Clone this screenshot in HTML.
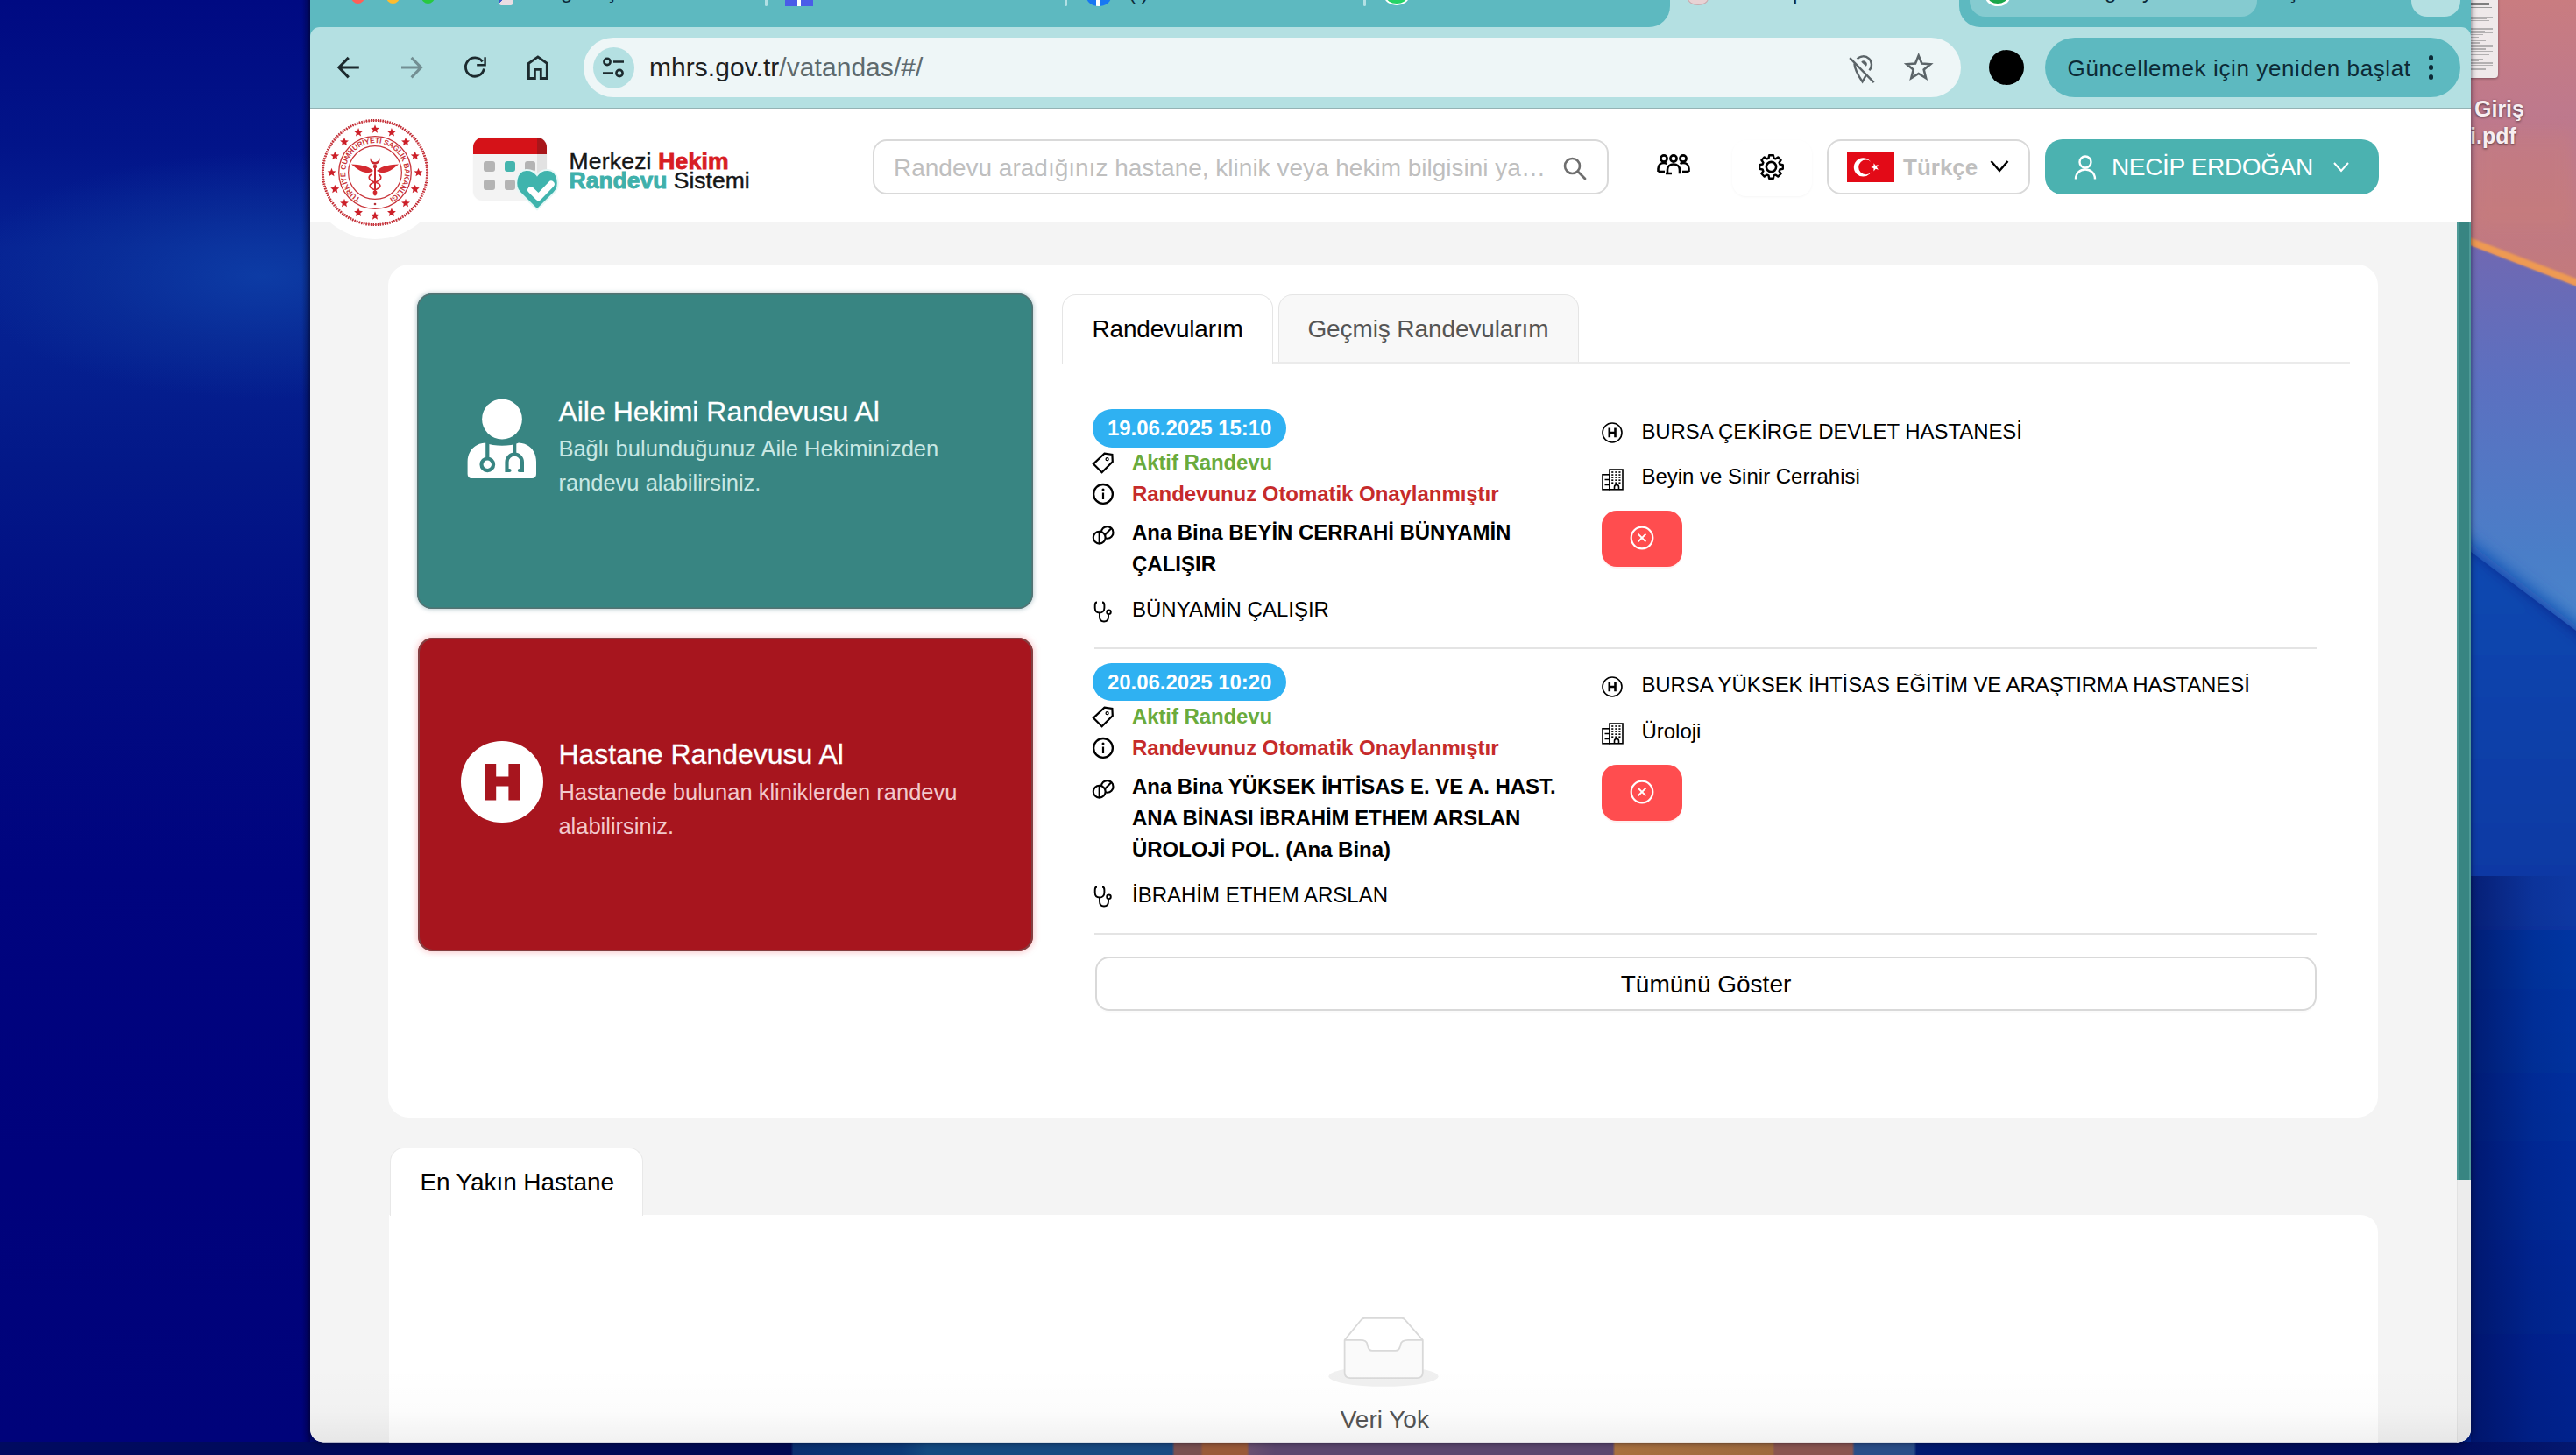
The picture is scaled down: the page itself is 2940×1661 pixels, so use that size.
<!DOCTYPE html>
<html><head><meta charset="utf-8"><style>
*{margin:0;padding:0;box-sizing:border-box}
html,body{width:2940px;height:1661px;overflow:hidden;background:#000a70}
body{position:relative;font-family:"Liberation Sans",sans-serif}
.t{position:absolute;white-space:nowrap;line-height:1}
.r{position:absolute}
svg{position:absolute;overflow:visible}
</style></head><body>
<div class="r" style="left:0;top:0;width:354px;height:1661px;background:radial-gradient(ellipse 340px 140px at 300px 315px,rgba(14,64,168,.85) 0%,rgba(14,60,160,.4) 55%,rgba(14,60,160,0) 100%),linear-gradient(180deg,#000a82 0%,#021489 10%,#062293 17%,#052090 24%,#031888 32%,#010c82 45%,#00047f 60%,#00027c 80%,#00037a 100%)"></div>
<div class="r" style="left:344px;top:0;width:10px;height:1661px;background:linear-gradient(90deg,rgba(0,0,30,0) 0%,rgba(0,0,30,.35) 100%)"></div>
<svg style="left:2820px;top:0" width="120" height="1661" viewBox="0 0 120 1661"><defs>
<filter id="bl8" x="-50%" y="-20%" width="200%" height="140%"><feGaussianBlur stdDeviation="10"/></filter><filter id="bl1"><feGaussianBlur stdDeviation="1.2"/></filter><linearGradient id="g1" x1="0" y1="0" x2="0" y2="1"><stop offset="0" stop-color="#c97c80"/><stop offset=".5" stop-color="#bb7890"/><stop offset="1" stop-color="#c47a7a"/></linearGradient>
<linearGradient id="g2" x1="0" y1="0" x2="0" y2="1"><stop offset="0" stop-color="#7068b2"/><stop offset=".35" stop-color="#5c70c0"/><stop offset=".8" stop-color="#4a7ec8"/><stop offset="1" stop-color="#4a86cc"/></linearGradient>
<linearGradient id="g3" x1="0" y1="0" x2="0" y2="1"><stop offset="0" stop-color="#0c4ab2"/><stop offset=".3" stop-color="#083ca6"/><stop offset=".6" stop-color="#042e9c"/><stop offset="1" stop-color="#021e8a"/></linearGradient>
</defs>
<rect width="120" height="330" fill="url(#g1)"/><rect y="150" width="120" height="110" fill="#d08070" opacity=".35" filter="url(#bl8)"/>
<polygon points="0,280 120,326 120,720 0,630" fill="url(#g2)"/>
<line x1="-10" y1="272" x2="130" y2="326" stroke="#ee9a52" stroke-width="8" filter="url(#bl1)"/>
<polygon points="-40,590 160,745 160,1700 -40,1700" fill="url(#g3)" filter="url(#bl8)"/>
<linearGradient id="g5" x1="0" y1="0" x2="1" y2="0"><stop offset="0" stop-color="#000a50" stop-opacity=".55"/><stop offset=".6" stop-color="#000a50" stop-opacity=".1"/><stop offset="1" stop-color="#000a50" stop-opacity="0"/></linearGradient><rect y="1000" width="120" height="661" fill="url(#g5)"/>
</svg>
<div class="r" style="left:0;top:1646px;width:2940px;height:15px;background:linear-gradient(90deg,#000a60 0%,#000a52 30.7%,#0a3070 30.8%,#0c3a78 35%,#134a80 36%,#1a4a82 45.5%,#7a5050 45.6%,#7a5050 46.6%,#9a5a38 46.7%,#9a5a38 48.4%,#6a5070 48.5%,#5c476e 49.5%,#5c476e 62.6%,#a8703f 62.7%,#9e6a3e 68.8%,#8a5550 68.9%,#8a5550 71.9%,#2a4e88 72%,#2a4e88 74.3%,#001a70 74.4%,#000e5a 85%,#000c5c 95%,#041870 100%)"></div>
<div class="r" style="left:2814.0px;top:-5.0px;width:37.0px;height:94.0px;background:#efe9ea;border-radius:0 0 4px 4px;box-shadow:0 1px 3px rgba(0,0,0,.35)"></div>
<div class="r" style="left:2820.0px;top:3.0px;width:21.0px;height:2.5px;background:#5a5a5a;opacity:.75"></div>
<div class="r" style="left:2820.0px;top:7.5px;width:24.0px;height:1.0px;background:#777;opacity:.7"></div>
<div class="r" style="left:2820.0px;top:18.5px;width:25.0px;height:1.3px;background:#8a8a8a;opacity:.6"></div>
<div class="r" style="left:2820.0px;top:20.8px;width:18.0px;height:1.3px;background:#8a8a8a;opacity:.6"></div>
<div class="r" style="left:2820.0px;top:23.1px;width:21.0px;height:1.3px;background:#8a8a8a;opacity:.6"></div>
<div class="r" style="left:2820.0px;top:27.7px;width:25.0px;height:1.3px;background:#8a8a8a;opacity:.6"></div>
<div class="r" style="left:2820.0px;top:32.3px;width:25.0px;height:1.3px;background:#8a8a8a;opacity:.6"></div>
<div class="r" style="left:2820.0px;top:34.6px;width:16.0px;height:1.3px;background:#8a8a8a;opacity:.6"></div>
<div class="r" style="left:2820.0px;top:36.9px;width:25.0px;height:1.3px;background:#8a8a8a;opacity:.6"></div>
<div class="r" style="left:2820.0px;top:39.2px;width:14.0px;height:1.3px;background:#8a8a8a;opacity:.6"></div>
<div class="r" style="left:2820.0px;top:41.5px;width:9.0px;height:1.3px;background:#8a8a8a;opacity:.6"></div>
<div class="r" style="left:2820.0px;top:43.8px;width:25.0px;height:1.3px;background:#8a8a8a;opacity:.6"></div>
<div class="r" style="left:2820.0px;top:46.1px;width:17.0px;height:1.3px;background:#8a8a8a;opacity:.6"></div>
<div class="r" style="left:2820.0px;top:48.4px;width:11.0px;height:1.3px;background:#8a8a8a;opacity:.6"></div>
<div class="r" style="left:2820.0px;top:50.7px;width:25.0px;height:1.3px;background:#8a8a8a;opacity:.6"></div>
<div class="r" style="left:2820.0px;top:53.0px;width:25.0px;height:1.3px;background:#8a8a8a;opacity:.6"></div>
<div class="r" style="left:2820.0px;top:55.3px;width:17.0px;height:1.3px;background:#8a8a8a;opacity:.6"></div>
<div class="r" style="left:2820.0px;top:57.6px;width:25.0px;height:1.3px;background:#8a8a8a;opacity:.6"></div>
<div class="r" style="left:2820.0px;top:59.9px;width:25.0px;height:1.3px;background:#8a8a8a;opacity:.6"></div>
<div class="r" style="left:2820.0px;top:62.2px;width:21.0px;height:1.3px;background:#8a8a8a;opacity:.6"></div>
<div class="r" style="left:2820.0px;top:66.8px;width:14.0px;height:1.3px;background:#8a8a8a;opacity:.6"></div>
<div class="r" style="left:2820.0px;top:69.1px;width:9.0px;height:1.3px;background:#8a8a8a;opacity:.6"></div>
<div class="r" style="left:2820.0px;top:71.4px;width:25.0px;height:1.3px;background:#8a8a8a;opacity:.6"></div>
<div class="r" style="left:2820.0px;top:73.7px;width:25.0px;height:1.3px;background:#8a8a8a;opacity:.6"></div>
<div class="r" style="left:2820.0px;top:76.0px;width:25.0px;height:1.3px;background:#8a8a8a;opacity:.6"></div>
<div class="r" style="left:2820.0px;top:78.3px;width:17.0px;height:1.3px;background:#8a8a8a;opacity:.6"></div>
<div class="t " style="left:2824.0px;top:111.8px;font-size:25px;color:#f8eef0;font-weight:700;text-shadow:0 1px 3px rgba(0,0,0,.6)">Giriş</div>
<div class="t " style="left:2819.0px;top:143.4px;font-size:25px;color:#f8eef0;font-weight:700;text-shadow:0 1px 3px rgba(0,0,0,.6)">i.pdf</div>
<div class="r" style="left:354.0px;top:-20.0px;width:2466.0px;height:1666.5px;border-radius:0 0 15px 15px;box-shadow:0 0 6px 1px rgba(0,0,20,.45)"></div>
<div id="win" class="r" style="left:0;top:0;width:2940px;height:1661px;clip-path:inset(0px 120px 14.5px 354px round 0 0 15px 15px);background:#f4f4f4">
<div class="r" style="left:354.0px;top:0.0px;width:2466.0px;height:45.0px;background:#5db9c0"></div>
<div class="r" style="left:400.5px;top:-11.5px;width:15.0px;height:15.0px;background:#ff5f57;border-radius:50%"></div>
<div class="r" style="left:440.5px;top:-11.5px;width:15.0px;height:15.0px;background:#febc2e;border-radius:50%"></div>
<div class="r" style="left:480.5px;top:-11.5px;width:15.0px;height:15.0px;background:#28c840;border-radius:50%"></div>
<div class="r" style="left:570.0px;top:-10.0px;width:15.0px;height:15.7px;background:linear-gradient(135deg,#3f5bd0 0 45%,#eadde3 45%);border-radius:0 0 2px 2px"></div>
<div class="t " style="left:640.0px;top:-21.8px;font-size:24px;color:#0d2b3a;font-weight:400;">ğ</div>
<div class="t " style="left:692.0px;top:-21.8px;font-size:24px;color:#0d2b3a;font-weight:400;">ş</div>
<div class="r" style="left:872.5px;top:-5.0px;width:3.0px;height:11.8px;background:#b3e0e4;border-radius:2px"></div>
<div class="r" style="left:1214.5px;top:-5.0px;width:3.0px;height:11.8px;background:#b3e0e4;border-radius:2px"></div>
<div class="r" style="left:1556.0px;top:-5.0px;width:3.0px;height:11.8px;background:#b3e0e4;border-radius:2px"></div>
<div class="r" style="left:896.0px;top:-10.0px;width:31.5px;height:16.8px;background:linear-gradient(90deg,#4a5ce8 0 43%,#fff 43% 57%,#4a5ce8 57%)"></div>
<div class="r" style="left:1240.0px;top:-14.0px;width:28.0px;height:20.8px;background:linear-gradient(90deg,#1877f2 0 38%,#fff 38% 57%,#1877f2 57%);border-radius:50%"></div>
<div class="t " style="left:1288.0px;top:-21.3px;font-size:24px;color:#0d2b3a;font-weight:400;">( )</div>
<div class="r" style="left:1580.0px;top:-14.0px;width:27.6px;height:19.8px;background:#25d366;border-radius:50%;border:2.5px solid #fff"></div>
<div class="r" style="left:1882.0px;top:0.0px;width:378.0px;height:31.0px;background:#b4e0e2"></div>
<div class="r" style="left:1850.0px;top:-5.0px;width:56.0px;height:36.0px;background:#5db9c0;border-bottom-right-radius:24px"></div>
<div class="r" style="left:2236.0px;top:-5.0px;width:54.0px;height:36.0px;background:#5db9c0;border-bottom-left-radius:24px"></div>
<div class="r" style="left:1926.0px;top:-10.0px;width:24.0px;height:16.0px;background:#e8d2d4;border-radius:50%;border:1.5px solid #c9a9ad"></div>
<div class="t " style="left:2046.0px;top:-21.3px;font-size:24px;color:#0d2b3a;font-weight:400;">p</div>
<div class="r" style="left:2248.0px;top:-20.0px;width:328.0px;height:38.6px;background:#85cbd0;border-radius:0 0 18px 18px"></div>
<div class="r" style="left:2266.0px;top:-14.0px;width:28.0px;height:21.0px;background:#1aa64a;border-radius:50%;border:3px solid #fff"></div>
<div class="t " style="left:2402.0px;top:-21.8px;font-size:24px;color:#0d2b3a;font-weight:400;">g</div>
<div class="t " style="left:2445.0px;top:-21.8px;font-size:24px;color:#0d2b3a;font-weight:400;">y</div>
<div class="t " style="left:2611.0px;top:-21.8px;font-size:24px;color:#0d2b3a;font-weight:400;">ş</div>
<div class="r" style="left:2752.0px;top:-20.0px;width:56.0px;height:38.6px;background:#b4e0e2;border-radius:0 0 18px 18px"></div>
<div class="r" style="left:354.0px;top:31.0px;width:2466.0px;height:93.0px;background:#b4e0e2;border-radius:11px 11px 0 0"></div>
<svg style="left:380px;top:60px" width="36" height="36" viewBox="0 0 36 36"><path d="M29.8 17H7.5M17.8 5.8L6.9 17L17.8 28.3" fill="none" stroke="#1c2a2e" stroke-width="3.1"/></svg>
<svg style="left:452px;top:60px" width="36" height="36" viewBox="0 0 36 36"><path d="M6 17H28M17.6 5.8L28.5 17L17.6 28.3" fill="none" stroke="#738f93" stroke-width="3.1"/></svg>
<svg style="left:524px;top:59px" width="36" height="36" viewBox="0 0 36 36"><path d="M26.6 11.4A10.6 10.6 0 1 0 28.4 19.5" fill="none" stroke="#1c2a2e" stroke-width="2.8"/><path d="M29.6 6.2V15.3H20.2" fill="none" stroke="#1c2a2e" stroke-width="2.4"/></svg>
<svg style="left:596px;top:59px" width="36" height="36" viewBox="0 0 36 36"><path d="M7.4 30.5V13.3L17.9 5.9L28.3 13.3V30.5H21.3V20.4H14.4V30.5Z" fill="none" stroke="#1c2a2e" stroke-width="2.8" stroke-linejoin="miter"/></svg>
<div class="r" style="left:666.0px;top:43.0px;width:1572.0px;height:67.7px;background:#eef6f7;border-radius:34px"></div>
<div class="r" style="left:676.5px;top:53.5px;width:47.0px;height:47.0px;background:#b4e0e2;border-radius:50%"></div>
<svg style="left:682px;top:59px" width="36" height="36" viewBox="0 0 36 36"><circle cx="11" cy="11.5" r="3.6" fill="none" stroke="#1c2a2e" stroke-width="2.6"/><path d="M18 11.5H30M6 24.5H18" stroke="#1c2a2e" stroke-width="2.6"/><circle cx="25" cy="24.5" r="3.6" fill="none" stroke="#1c2a2e" stroke-width="2.6"/></svg>
<div class="t " style="left:741.0px;top:62.0px;font-size:30px;color:#1f1f1f;font-weight:400;letter-spacing:0.05px"><span style="color:#1f1f1f">mhrs.gov.tr</span><span style="color:#5f6a6d">/vatandas/#/</span></div>
<svg style="left:2100px;top:55px" width="50" height="45" viewBox="0 0 50 45"><g fill="none" stroke="#5b6468" stroke-width="2.4"><path d="M19.6 12.3A9.3 9.3 0 0 1 33.4 25.3"/><path d="M16.4 17.5C16.6 24 20 30 25.6 38.3L29.8 30.8"/><path d="M11.2 11.2L38.7 39.1"/></g><path d="M24.2 15.8A3.6 3.6 0 0 1 29.7 20.8Z" fill="#5b6468"/></svg>
<svg style="left:2100px;top:55px" width="120" height="45" viewBox="0 0 120 45"><path d="M89.7 8.4L93.4 17.6L103.3 18.3L95.7 24.6L98.1 34.3L89.7 29L81.3 34.3L83.7 24.6L76.1 18.3L86 17.6Z" fill="none" stroke="#5b6468" stroke-width="2.6" stroke-linejoin="miter"/></svg>
<div class="r" style="left:2270.0px;top:57.0px;width:40.0px;height:40.0px;background:#000;border-radius:50%"></div>
<div class="r" style="left:2334.0px;top:43.0px;width:474.0px;height:67.7px;background:#5db9c0;border-radius:34px"></div>
<div class="t " style="left:2359.6px;top:64.7px;font-size:26px;color:#0c2a36;font-weight:400;letter-spacing:0.62px">Güncellemek için yeniden başlat</div>
<div class="r" style="left:2772.0px;top:63.4px;width:5.2px;height:5.2px;background:#0c2a36;border-radius:50%"></div>
<div class="r" style="left:2772.0px;top:74.4px;width:5.2px;height:5.2px;background:#0c2a36;border-radius:50%"></div>
<div class="r" style="left:2772.0px;top:85.4px;width:5.2px;height:5.2px;background:#0c2a36;border-radius:50%"></div>
<div class="r" style="left:354.0px;top:124.6px;width:2466.0px;height:1536.4px;background:#f4f4f4"></div>
<div class="r" style="left:354.0px;top:124.6px;width:2450.0px;height:128.1px;background:#fff"></div>
<div class="r" style="left:2804.0px;top:124.6px;width:16.0px;height:128.1px;background:#fff"></div>
<div class="r" style="left:2804.0px;top:252.7px;width:16.0px;height:1408.3px;background:#ececec;border-left:1px solid #e2e2e2"></div>
<div class="r" style="left:2804.0px;top:252.7px;width:16.0px;height:1094.3px;background:#388582;box-shadow:inset 2px 0 0 #4e9a97,inset -2px 0 0 #4e9a97"></div>
<div class="r" style="left:350.0px;top:117.0px;width:156.0px;height:156.0px;background:#fff;border-radius:50%;clip-path:inset(7.6px 0 0 0)"></div>
<svg style="left:366px;top:135px" width="124" height="124" viewBox="-62 -62 124 124"><circle r="59.6" fill="none" stroke="#b8262e" stroke-width="3" stroke-dasharray="1.5 1.2"/><circle r="59.6" fill="none" stroke="#e04a52" stroke-width="1" opacity=".6"/><polygon points="18.94,-50.93 20.29,-47.59 23.89,-47.34 21.13,-45.02 22.00,-41.53 18.94,-43.43 15.89,-41.53 16.76,-45.02 14.00,-47.34 17.59,-47.59" fill="#cc1f28"/><polygon points="35.00,-40.20 36.35,-36.86 39.95,-36.61 37.19,-34.29 38.06,-30.79 35.00,-32.70 31.95,-30.79 32.81,-34.29 30.06,-36.61 33.65,-36.86" fill="#cc1f28"/><polygon points="45.73,-24.14 47.08,-20.80 50.68,-20.55 47.92,-18.23 48.79,-14.74 45.73,-16.64 42.68,-14.74 43.54,-18.23 40.79,-20.55 44.38,-20.80" fill="#cc1f28"/><polygon points="49.50,-5.20 50.85,-1.86 54.45,-1.61 51.69,0.71 52.56,4.21 49.50,2.30 46.44,4.21 47.31,0.71 44.55,-1.61 48.15,-1.86" fill="#cc1f28"/><polygon points="45.73,13.74 47.08,17.08 50.68,17.34 47.92,19.65 48.79,23.15 45.73,21.24 42.68,23.15 43.54,19.65 40.79,17.34 44.38,17.08" fill="#cc1f28"/><polygon points="35.00,29.80 36.35,33.14 39.95,33.39 37.19,35.71 38.06,39.21 35.00,37.30 31.95,39.21 32.81,35.71 30.06,33.39 33.65,33.14" fill="#cc1f28"/><polygon points="18.94,40.53 20.29,43.87 23.89,44.13 21.13,46.44 22.00,49.94 18.94,48.03 15.89,49.94 16.76,46.44 14.00,44.13 17.59,43.87" fill="#cc1f28"/><polygon points="0.00,44.30 1.35,47.64 4.95,47.89 2.19,50.21 3.06,53.71 0.00,51.80 -3.06,53.71 -2.19,50.21 -4.95,47.89 -1.35,47.64" fill="#cc1f28"/><polygon points="-18.94,40.53 -17.59,43.87 -14.00,44.13 -16.76,46.44 -15.89,49.94 -18.94,48.03 -22.00,49.94 -21.13,46.44 -23.89,44.13 -20.29,43.87" fill="#cc1f28"/><polygon points="-35.00,29.80 -33.65,33.14 -30.06,33.39 -32.81,35.71 -31.95,39.21 -35.00,37.30 -38.06,39.21 -37.19,35.71 -39.95,33.39 -36.35,33.14" fill="#cc1f28"/><polygon points="-45.73,13.74 -44.38,17.08 -40.79,17.34 -43.54,19.65 -42.68,23.15 -45.73,21.24 -48.79,23.15 -47.92,19.65 -50.68,17.34 -47.08,17.08" fill="#cc1f28"/><polygon points="-49.50,-5.20 -48.15,-1.86 -44.55,-1.61 -47.31,0.71 -46.44,4.21 -49.50,2.30 -52.56,4.21 -51.69,0.71 -54.45,-1.61 -50.85,-1.86" fill="#cc1f28"/><polygon points="-45.73,-24.14 -44.38,-20.80 -40.79,-20.55 -43.54,-18.23 -42.68,-14.74 -45.73,-16.64 -48.79,-14.74 -47.92,-18.23 -50.68,-20.55 -47.08,-20.80" fill="#cc1f28"/><polygon points="-35.00,-40.20 -33.65,-36.86 -30.06,-36.61 -32.81,-34.29 -31.95,-30.79 -35.00,-32.70 -38.06,-30.79 -37.19,-34.29 -39.95,-36.61 -36.35,-36.86" fill="#cc1f28"/><polygon points="-18.94,-50.93 -17.59,-47.59 -14.00,-47.34 -16.76,-45.02 -15.89,-41.53 -18.94,-43.43 -22.00,-41.53 -21.13,-45.02 -23.89,-47.34 -20.29,-47.59" fill="#cc1f28"/><polygon points="-0.00,-54.70 1.35,-51.36 4.95,-51.11 2.19,-48.79 3.06,-45.29 -0.00,-47.20 -3.06,-45.29 -2.19,-48.79 -4.95,-51.11 -1.35,-51.36" fill="#cc1f28"/><circle r="41.3" fill="none" stroke="#c8343a" stroke-width="1.3"/><circle r="30.4" fill="none" stroke="#c8343a" stroke-width="1.2"/><g font-family="Liberation Sans" font-size="8.4" fill="#c8343a" font-weight="700"><text transform="translate(-18.69 28.16) rotate(213.6)" text-anchor="middle">T</text><text transform="translate(-23.02 24.75) rotate(222.9)" text-anchor="middle">Ü</text><text transform="translate(-27.02 20.30) rotate(233.1)" text-anchor="middle">R</text><text transform="translate(-30.18 15.22) rotate(243.2)" text-anchor="middle">K</text><text transform="translate(-31.81 11.44) rotate(250.2)" text-anchor="middle">İ</text><text transform="translate(-32.91 7.71) rotate(256.8)" text-anchor="middle">Y</text><text transform="translate(-33.73 2.25) rotate(266.2)" text-anchor="middle">E</text><text transform="translate(-33.31 -5.74) rotate(279.8)" text-anchor="middle">C</text><text transform="translate(-31.78 -11.52) rotate(289.9)" text-anchor="middle">U</text><text transform="translate(-29.01 -17.34) rotate(300.9)" text-anchor="middle">M</text><text transform="translate(-25.20 -22.53) rotate(311.8)" text-anchor="middle">H</text><text transform="translate(-20.83 -26.62) rotate(322.0)" text-anchor="middle">U</text><text transform="translate(-15.81 -29.87) rotate(332.1)" text-anchor="middle">R</text><text transform="translate(-12.06 -31.57) rotate(339.1)" text-anchor="middle">İ</text><text transform="translate(-8.35 -32.75) rotate(345.7)" text-anchor="middle">Y</text><text transform="translate(-2.91 -33.67) rotate(355.1)" text-anchor="middle">E</text><text transform="translate(2.37 -33.72) rotate(364.0)" text-anchor="middle">T</text><text transform="translate(6.00 -33.26) rotate(370.2)" text-anchor="middle">İ</text><text transform="translate(11.92 -31.63) rotate(380.6)" text-anchor="middle">S</text><text transform="translate(17.11 -29.15) rotate(390.4)" text-anchor="middle">A</text><text transform="translate(22.15 -25.53) rotate(401.0)" text-anchor="middle">Ğ</text><text transform="translate(26.16 -21.40) rotate(410.7)" text-anchor="middle">L</text><text transform="translate(28.32 -18.46) rotate(416.9)" text-anchor="middle">I</text><text transform="translate(30.35 -14.87) rotate(423.9)" text-anchor="middle">K</text><text transform="translate(33.05 -7.10) rotate(437.9)" text-anchor="middle">B</text><text transform="translate(33.78 -1.17) rotate(448.0)" text-anchor="middle">A</text><text transform="translate(33.46 4.81) rotate(458.2)" text-anchor="middle">K</text><text transform="translate(32.09 10.63) rotate(468.3)" text-anchor="middle">A</text><text transform="translate(29.71 16.12) rotate(478.5)" text-anchor="middle">N</text><text transform="translate(26.69 20.73) rotate(487.8)" text-anchor="middle">L</text><text transform="translate(24.30 23.49) rotate(494.0)" text-anchor="middle">I</text><text transform="translate(21.08 26.42) rotate(501.4)" text-anchor="middle">Ğ</text><text transform="translate(17.51 28.91) rotate(508.8)" text-anchor="middle">I</text></g><path d="M0 -7V26" stroke="#c82a30" stroke-width="2"/><circle cx="0" cy="-7" r="2.2" fill="#c82a30"/><path d="M-27 -9.5C-18 -9 -8 -8 -2 -2C-8 2 -14 0 -20 -4C-23 -6 -25 -8 -27 -9.5Z" fill="#d42a30"/><path d="M27 -9.5C18 -9 8 -8 2 -2C8 2 14 0 20 -4C23 -6 25 -8 27 -9.5Z" fill="#d42a30"/><path d="M-4 2C-9 5 -7 9 0 11C7 13 8 16 2 19C-3 21 -2 24 0 26M4 2C9 5 7 9 0 11C-7 13 -8 16 -2 19C3 21 2 24 0 26" fill="none" stroke="#d42a30" stroke-width="1.6"/><path d="M-5 -17A5.5 5.5 0 1 0 5 -17A4.3 4.3 0 1 1 -5 -17Z" fill="#c82a30"/><circle cx="0" cy="36" r="1.3" fill="#b43038"/></svg>
<div class="r" style="left:540.0px;top:157.0px;width:84.0px;height:72.0px;background:#f3f3f3;border-radius:11px;box-shadow:0 0 2px rgba(0,0,0,.06)"></div>
<div class="r" style="left:540.0px;top:157.0px;width:84.0px;height:18.7px;background:linear-gradient(90deg,#d51218 0 87%,#a8161a 87%);border-radius:11px 11px 0 0"></div>
<div class="r" style="left:613.0px;top:175.7px;width:11.0px;height:24.3px;background:#e2e2e2"></div>
<div class="r" style="left:552.4px;top:184.3px;width:12.2px;height:12.0px;background:#b4b4b4;border-radius:3px"></div>
<div class="r" style="left:576.2px;top:184.3px;width:12.2px;height:12.0px;background:#45b5ae;border-radius:3px"></div>
<div class="r" style="left:599.0px;top:184.3px;width:12.2px;height:12.0px;background:#b4b4b4;border-radius:3px"></div>
<div class="r" style="left:552.4px;top:204.9px;width:12.2px;height:12.0px;background:#b4b4b4;border-radius:3px"></div>
<div class="r" style="left:576.2px;top:204.9px;width:12.2px;height:12.0px;background:#b4b4b4;border-radius:3px"></div>
<svg style="left:586px;top:191px" width="54" height="52" viewBox="0 0 54 52"><path d="M27 48.4L7.5 29C0.5 22 2 4 14.5 3C20.5 2.5 24.5 5.5 27 9C29.5 5.5 33.5 2.5 39.5 3C52 4 53.5 22 46.5 29Z" fill="#3fb4ad" stroke="#e6f7f6" stroke-width="2"/><path d="M19.9 25.9L28.5 34.3L43 19.3" fill="none" stroke="#fff" stroke-width="7.5" stroke-linecap="round" stroke-linejoin="round"/></svg>
<div class="t " style="left:649.5px;top:170.6px;font-size:26.5px;color:#161616;font-weight:400;letter-spacing:0.2px;-webkit-text-stroke:0.45px #161616">Merkezi <span style="color:#d81d24;font-weight:700;-webkit-text-stroke:0.9px #d81d24">Hekim</span></div>
<div class="t " style="left:649.5px;top:193.0px;font-size:26.5px;color:#161616;font-weight:400;letter-spacing:0.0px;-webkit-text-stroke:0.45px #161616"><span style="color:#3fb0ab;font-weight:700;-webkit-text-stroke:0.9px #3fb0ab">Randevu</span> Sistemi</div>
<div class="r" style="left:995.7px;top:159.0px;width:840.3px;height:63.0px;border:2px solid #d9d9d9;border-radius:16px;background:#fff"></div>
<div class="t " style="left:1020.0px;top:178.3px;font-size:28px;color:#bfbfbf;font-weight:400;">Randevu aradığınız hastane, klinik veya hekim bilgisini ya…</div>
<svg style="left:1782px;top:177px" width="30" height="30" viewBox="0 0 30 30"><circle cx="12.5" cy="12.5" r="8.5" fill="none" stroke="#6e6e6e" stroke-width="2.6"/><path d="M18.8 18.8L27 27" stroke="#6e6e6e" stroke-width="2.8" stroke-linecap="round"/></svg>
<svg style="left:1891px;top:175px" width="38" height="24" viewBox="0 0 38 24"><g fill="none" stroke="#000" stroke-width="2.6"><circle cx="8" cy="6" r="3.6"/><circle cx="19" cy="6" r="3.6"/><circle cx="30" cy="6" r="3.6"/><path d="M1.5 21V17.5C1.5 13.5 4.5 11 8 11C9.5 11 10.5 11.4 11.5 12"/><path d="M36.5 21V17.5C36.5 13.5 33.5 11 30 11C28.5 11 27.5 11.4 26.5 12"/><path d="M1.5 21H9"/><path d="M29 21H36.5"/><path d="M12 22.3V19C12 15 15 12.5 19 12.5C23 12.5 26 15 26 19V23.3M10 23H17"/></g></svg>
<svg style="left:2006px;top:175px" width="31" height="31" viewBox="-15.5 -15.5 31 31"><path d="M13.29 -2.34 L13.29 2.34 L9.85 3.01 L9.09 4.84 L11.06 7.74 L7.74 11.06 L4.84 9.09 L3.01 9.85 L2.34 13.29 L-2.34 13.29 L-3.01 9.85 L-4.84 9.09 L-7.74 11.06 L-11.06 7.74 L-9.09 4.84 L-9.85 3.01 L-13.29 2.34 L-13.29 -2.34 L-9.85 -3.01 L-9.09 -4.84 L-11.06 -7.74 L-7.74 -11.06 L-4.84 -9.09 L-3.01 -9.85 L-2.34 -13.29 L2.34 -13.29 L3.01 -9.85 L4.84 -9.09 L7.74 -11.06 L11.06 -7.74 L9.09 -4.84 L9.85 -3.01Z" fill="none" stroke="#000" stroke-width="2.4" stroke-linejoin="round"/><circle r="5.6" fill="none" stroke="#000" stroke-width="2.6"/></svg>
<div class="r" style="left:1977.0px;top:160.0px;width:91.0px;height:64.0px;border-radius:16px;box-shadow:0 1px 3px rgba(0,0,0,.04)"></div>
<div class="r" style="left:2085.0px;top:159.0px;width:232.0px;height:63.0px;border:2px solid #d9d9d9;border-radius:16px;background:#fff"></div>
<svg style="left:2108px;top:174px" width="54" height="34" viewBox="0 0 54 34"><rect width="54" height="34" fill="#e30a17"/><circle cx="18.4" cy="16.9" r="10.6" fill="#fff"/><circle cx="21.6" cy="16.9" r="8.4" fill="#e30a17"/><polygon points="27.20,16.90 30.38,15.72 30.52,12.33 32.62,15.00 35.88,14.08 34.00,16.90 35.88,19.72 32.62,18.80 30.52,21.47 30.38,18.08" fill="#fff"/></svg>
<div class="t " style="left:2172.0px;top:178.0px;font-size:26px;color:#bfbfbf;font-weight:700;">Türkçe</div>
<svg style="left:2270px;top:181px" width="24" height="18" viewBox="0 0 24 18"><path d="M2.5 3L12 14L21.5 3" fill="none" stroke="#000" stroke-width="2.4"/></svg>
<div class="r" style="left:2334.0px;top:159.0px;width:381.0px;height:63.0px;background:#4bb2b0;border-radius:20px"></div>
<svg style="left:2366px;top:176px" width="28" height="30" viewBox="0 0 28 30"><circle cx="14" cy="9" r="6.5" fill="none" stroke="#fff" stroke-width="2.4"/><path d="M3 28.5C3 21.5 8 17.5 14 17.5C20 17.5 25 21.5 25 28.5" fill="none" stroke="#fff" stroke-width="2.4"/></svg>
<div class="t " style="left:2410.0px;top:176.7px;font-size:28px;color:#fff;font-weight:400;letter-spacing:-0.35px">NECİP ERDOĞAN</div>
<svg style="left:2662px;top:183px" width="20" height="15" viewBox="0 0 20 15"><path d="M2 3L10 12L18 3" fill="none" stroke="#fff" stroke-width="2"/></svg>
<div class="r" style="left:443.3px;top:302.4px;width:2270.7px;height:974.0px;background:#fff;border-radius:24px"></div>
<div class="r" style="left:476.0px;top:335.0px;width:703.0px;height:359.6px;background:#388582;border-radius:17px;box-shadow:inset 0 0 0 1.6px rgba(88,110,112,.85),0 0 5px 1px rgba(90,130,140,.4)"></div>
<svg style="left:533px;top:455px" width="82" height="93" viewBox="0 0 82 93"><circle cx="40" cy="23.5" r="22.9" fill="#fff"/><path d="M0.6 86V72C0.6 60 9 51 21 50.5C26 52.8 33 53.8 40 53.8C47 53.8 54 52.8 59 50.5C71 51 79 60 79 72V86Q79 91 74 91H5.6Q0.6 91 0.6 86Z" fill="#fff"/><g fill="none" stroke="#388582" stroke-width="4.2" stroke-linecap="round"><path d="M23.3 49V68"/><circle cx="23.3" cy="75.3" r="6.8"/><path d="M54.2 49V62"/><path d="M48.5 82H45.5V72.4A8.7 8.7 0 0 1 62.9 72.4V82H59.9"/></g></svg>
<div class="t " style="left:637.4px;top:453.9px;font-size:32px;color:#fff;font-weight:400;letter-spacing:0px;-webkit-text-stroke:0.3px #fff">Aile Hekimi Randevusu Al</div>
<div class="t " style="left:637.4px;top:500.4px;font-size:25.5px;color:#c9e7e3;font-weight:400;">Bağlı bulunduğunuz Aile Hekiminizden</div>
<div class="t " style="left:637.4px;top:539.4px;font-size:25.5px;color:#c9e7e3;font-weight:400;">randevu alabilirsiniz.</div>
<div class="r" style="left:476.8px;top:727.5px;width:701.9px;height:358.5px;background:#a7151e;border-radius:17px;box-shadow:inset 0 0 0 2px rgba(125,70,72,.85),0 0 6px 2px rgba(240,120,130,.35)"></div>
<div class="r" style="left:526.3px;top:845.9px;width:93.6px;height:93.6px;background:#fff;border-radius:50%"></div>
<svg style="left:552.8px;top:872.2px" width="41" height="42" viewBox="0 0 41 42"><path d="M0 0H13.2V14.6H27.4V0H40.5V41.5H27.4V25.6H13.2V41.5H0Z" fill="#a7151e"/></svg>
<div class="t " style="left:637.4px;top:845.4px;font-size:32px;color:#fff;font-weight:400;letter-spacing:0px;-webkit-text-stroke:0.3px #fff">Hastane Randevusu Al</div>
<div class="t " style="left:637.4px;top:891.9px;font-size:25.5px;color:#f3c9cc;font-weight:400;">Hastanede bulunan kliniklerden randevu</div>
<div class="t " style="left:637.4px;top:931.1px;font-size:25.5px;color:#f3c9cc;font-weight:400;">alabilirsiniz.</div>
<div class="r" style="left:1211.7px;top:413.3px;width:1470.3px;height:1.7px;background:#ebebeb"></div>
<div class="r" style="left:1211.7px;top:335.8px;width:241.3px;height:79.2px;background:#fff;border:1.6px solid #e5e5e5;border-bottom:none;border-radius:16px 16px 0 0"></div>
<div class="r" style="left:1458.5px;top:335.8px;width:343.5px;height:77.7px;background:#f8f8f8;border:1.6px solid #e5e5e5;border-bottom:none;border-radius:16px 16px 0 0"></div>
<div class="t " style="left:1246.5px;top:361.8px;font-size:28px;color:#000;font-weight:400;letter-spacing:-0.18px">Randevularım</div>
<div class="t " style="left:1492.4px;top:361.8px;font-size:28px;color:#555;font-weight:400;letter-spacing:-0.1px">Geçmiş Randevularım</div>
<div class="r" style="left:1246.8px;top:466.8px;width:221.2px;height:44.2px;background:#2fb1f2;border-radius:22px"></div>
<div class="t " style="left:1264.0px;top:477.1px;font-size:24px;color:#fff;font-weight:700;letter-spacing:-0.05px">19.06.2025 15:10</div>
<div class="t " style="left:1292.0px;top:516.3px;font-size:24px;color:#6aab3c;font-weight:700;letter-spacing:-0.1px">Aktif Randevu</div>
<div class="t " style="left:1292.0px;top:552.0px;font-size:24px;color:#c62b2b;font-weight:700;letter-spacing:-0.05px">Randevunuz Otomatik Onaylanmıştır</div>
<div class="t " style="left:1292.0px;top:596.2px;font-size:24px;color:#000;font-weight:700;letter-spacing:-0.05px">Ana Bina BEYİN CERRAHİ BÜNYAMİN</div>
<div class="t " style="left:1292.0px;top:632.3px;font-size:24px;color:#000;font-weight:700;">ÇALIŞIR</div>
<div class="t " style="left:1292.0px;top:684.1px;font-size:24px;color:#000;font-weight:400;">BÜNYAMİN ÇALIŞIR</div>
<svg style="left:1244px;top:513px" width="30" height="30" viewBox="0 0 30 30"><path d="M16.5 4.7L25.4 5.9L25.8 14.1L13.6 26.3L3.9 16.6Z" fill="none" stroke="#000" stroke-width="2.2" stroke-linejoin="miter"/><circle cx="19.6" cy="11.2" r="1.5" fill="none" stroke="#000" stroke-width="1.3"/></svg>
<svg style="left:1244px;top:549px" width="30" height="30" viewBox="0 0 30 30"><circle cx="15" cy="14.9" r="10.9" fill="none" stroke="#000" stroke-width="2.3"/><circle cx="15" cy="10" r="1.5" fill="#000"/><path d="M15 13.5V21" stroke="#000" stroke-width="2.2"/></svg>
<svg style="left:1244px;top:597px" width="30" height="30" viewBox="0 0 30 30"><g fill="none" stroke="#000" stroke-width="2.1"><circle cx="19.7" cy="10.9" r="6.8"/><path d="M14.9 15.7L24.5 6.1"/><circle cx="10.7" cy="16.7" r="6.9" fill="#fff"/><path d="M10.7 9.8V23.6"/></g></svg>
<svg style="left:1244px;top:683px" width="30" height="30" viewBox="0 0 30 30"><g fill="none" stroke="#000" stroke-width="1.9"><path d="M8 4.5C6 4.5 5.7 6 5.7 8V11C5.7 14.5 8 16.5 11 16.5C14 16.5 16.4 14.5 16.4 11V8C16.4 6 16 4.5 14 4.5"/><path d="M11 16.5V21C11 24.5 13 26.5 16 26.5C19 26.5 21 24.5 21 21V18.5"/><circle cx="21.5" cy="15.8" r="2.3"/></g></svg>
<svg style="left:1826px;top:479px" width="30" height="30" viewBox="0 0 30 30"><circle cx="14" cy="15" r="11" fill="none" stroke="#000" stroke-width="1.6"/><path d="M10.8 9.5V20.3M17.5 9.5V20.3M10.8 15H17.5" stroke="#000" stroke-width="2.6"/></svg>
<svg style="left:1826px;top:531px" width="30" height="30" viewBox="0 0 30 30"><g fill="none" stroke="#000" stroke-width="1.6"><rect x="3" y="10.8" width="8" height="17"/><rect x="11" y="5" width="15" height="22.8"/><path d="M5.5 16.5H11M5.5 22.5H11"/><path d="M16.5 27.8V25A2.5 2.5 0 0 1 21.5 25V27.8"/></g><g fill="#000"><rect x="13.2" y="7.2" width="2.1" height="1.6"/><rect x="13.2" y="10.25" width="2.1" height="1.6"/><rect x="13.2" y="13.3" width="2.1" height="1.6"/><rect x="13.2" y="16.349999999999998" width="2.1" height="1.6"/><rect x="13.2" y="19.4" width="2.1" height="1.6"/><rect x="17.299999999999997" y="7.2" width="2.1" height="1.6"/><rect x="17.299999999999997" y="10.25" width="2.1" height="1.6"/><rect x="17.299999999999997" y="13.3" width="2.1" height="1.6"/><rect x="17.299999999999997" y="16.349999999999998" width="2.1" height="1.6"/><rect x="17.299999999999997" y="19.4" width="2.1" height="1.6"/><rect x="21.4" y="7.2" width="2.1" height="1.6"/><rect x="21.4" y="10.25" width="2.1" height="1.6"/><rect x="21.4" y="13.3" width="2.1" height="1.6"/><rect x="21.4" y="16.349999999999998" width="2.1" height="1.6"/><rect x="21.4" y="19.4" width="2.1" height="1.6"/></g></svg>
<div class="t " style="left:1873.4px;top:480.5px;font-size:24px;color:#000;font-weight:400;letter-spacing:-0.07px">BURSA ÇEKİRGE DEVLET HASTANESİ</div>
<div class="t " style="left:1873.4px;top:532.2px;font-size:24px;color:#000;font-weight:400;">Beyin ve Sinir Cerrahisi</div>
<div class="r" style="left:1828.0px;top:583.0px;width:92.0px;height:63.8px;background:#ff4d4f;border-radius:17px;box-shadow:0 2px 0 rgba(255,77,79,.08)"></div>
<svg style="left:1860px;top:600px" width="28" height="28" viewBox="0 0 28 28"><circle cx="14" cy="14" r="12.3" fill="none" stroke="#fff" stroke-width="2.2"/><path d="M9.6 9.6L18.4 18.4M18.4 9.6L9.6 18.4" stroke="#fff" stroke-width="2"/></svg>
<div class="r" style="left:1249.0px;top:738.8px;width:1395.0px;height:2.0px;background:#e4e4e4"></div>
<div class="r" style="left:1246.8px;top:757.0px;width:221.2px;height:43.4px;background:#2fb1f2;border-radius:22px"></div>
<div class="t " style="left:1264.0px;top:767.1px;font-size:24px;color:#fff;font-weight:700;letter-spacing:-0.05px">20.06.2025 10:20</div>
<div class="t " style="left:1292.0px;top:805.7px;font-size:24px;color:#6aab3c;font-weight:700;letter-spacing:-0.1px">Aktif Randevu</div>
<div class="t " style="left:1292.0px;top:841.7px;font-size:24px;color:#c62b2b;font-weight:700;letter-spacing:-0.05px">Randevunuz Otomatik Onaylanmıştır</div>
<div class="t " style="left:1292.0px;top:886.1px;font-size:24px;color:#000;font-weight:700;letter-spacing:-0.05px">Ana Bina YÜKSEK İHTİSAS E. VE A. HAST.</div>
<div class="t " style="left:1292.0px;top:922.2px;font-size:24px;color:#000;font-weight:700;letter-spacing:-0.05px">ANA BİNASI İBRAHİM ETHEM ARSLAN</div>
<div class="t " style="left:1292.0px;top:958.3px;font-size:24px;color:#000;font-weight:700;letter-spacing:-0.05px">ÜROLOJİ POL. (Ana Bina)</div>
<div class="t " style="left:1292.0px;top:1009.5px;font-size:24px;color:#000;font-weight:400;">İBRAHİM ETHEM ARSLAN</div>
<svg style="left:1244px;top:803px" width="30" height="30" viewBox="0 0 30 30"><path d="M16.5 4.7L25.4 5.9L25.8 14.1L13.6 26.3L3.9 16.6Z" fill="none" stroke="#000" stroke-width="2.2" stroke-linejoin="miter"/><circle cx="19.6" cy="11.2" r="1.5" fill="none" stroke="#000" stroke-width="1.3"/></svg>
<svg style="left:1244px;top:839px" width="30" height="30" viewBox="0 0 30 30"><circle cx="15" cy="14.9" r="10.9" fill="none" stroke="#000" stroke-width="2.3"/><circle cx="15" cy="10" r="1.5" fill="#000"/><path d="M15 13.5V21" stroke="#000" stroke-width="2.2"/></svg>
<svg style="left:1244px;top:887px" width="30" height="30" viewBox="0 0 30 30"><g fill="none" stroke="#000" stroke-width="2.1"><circle cx="19.7" cy="10.9" r="6.8"/><path d="M14.9 15.7L24.5 6.1"/><circle cx="10.7" cy="16.7" r="6.9" fill="#fff"/><path d="M10.7 9.8V23.6"/></g></svg>
<svg style="left:1244px;top:1008px" width="30" height="30" viewBox="0 0 30 30"><g fill="none" stroke="#000" stroke-width="1.9"><path d="M8 4.5C6 4.5 5.7 6 5.7 8V11C5.7 14.5 8 16.5 11 16.5C14 16.5 16.4 14.5 16.4 11V8C16.4 6 16 4.5 14 4.5"/><path d="M11 16.5V21C11 24.5 13 26.5 16 26.5C19 26.5 21 24.5 21 21V18.5"/><circle cx="21.5" cy="15.8" r="2.3"/></g></svg>
<svg style="left:1826px;top:769px" width="30" height="30" viewBox="0 0 30 30"><circle cx="14" cy="15" r="11" fill="none" stroke="#000" stroke-width="1.6"/><path d="M10.8 9.5V20.3M17.5 9.5V20.3M10.8 15H17.5" stroke="#000" stroke-width="2.6"/></svg>
<svg style="left:1826px;top:821px" width="30" height="30" viewBox="0 0 30 30"><g fill="none" stroke="#000" stroke-width="1.6"><rect x="3" y="10.8" width="8" height="17"/><rect x="11" y="5" width="15" height="22.8"/><path d="M5.5 16.5H11M5.5 22.5H11"/><path d="M16.5 27.8V25A2.5 2.5 0 0 1 21.5 25V27.8"/></g><g fill="#000"><rect x="13.2" y="7.2" width="2.1" height="1.6"/><rect x="13.2" y="10.25" width="2.1" height="1.6"/><rect x="13.2" y="13.3" width="2.1" height="1.6"/><rect x="13.2" y="16.349999999999998" width="2.1" height="1.6"/><rect x="13.2" y="19.4" width="2.1" height="1.6"/><rect x="17.299999999999997" y="7.2" width="2.1" height="1.6"/><rect x="17.299999999999997" y="10.25" width="2.1" height="1.6"/><rect x="17.299999999999997" y="13.3" width="2.1" height="1.6"/><rect x="17.299999999999997" y="16.349999999999998" width="2.1" height="1.6"/><rect x="17.299999999999997" y="19.4" width="2.1" height="1.6"/><rect x="21.4" y="7.2" width="2.1" height="1.6"/><rect x="21.4" y="10.25" width="2.1" height="1.6"/><rect x="21.4" y="13.3" width="2.1" height="1.6"/><rect x="21.4" y="16.349999999999998" width="2.1" height="1.6"/><rect x="21.4" y="19.4" width="2.1" height="1.6"/></g></svg>
<div class="t " style="left:1873.4px;top:770.4px;font-size:24px;color:#000;font-weight:400;letter-spacing:-0.07px">BURSA YÜKSEK İHTİSAS EĞİTİM VE ARAŞTIRMA HASTANESİ</div>
<div class="t " style="left:1873.4px;top:822.7px;font-size:24px;color:#000;font-weight:400;">Üroloji</div>
<div class="r" style="left:1828.0px;top:872.8px;width:92.0px;height:63.8px;background:#ff4d4f;border-radius:17px;box-shadow:0 2px 0 rgba(255,77,79,.08)"></div>
<svg style="left:1860px;top:889.8px" width="28" height="28" viewBox="0 0 28 28"><circle cx="14" cy="14" r="12.3" fill="none" stroke="#fff" stroke-width="2.2"/><path d="M9.6 9.6L18.4 18.4M18.4 9.6L9.6 18.4" stroke="#fff" stroke-width="2"/></svg>
<div class="r" style="left:1249.0px;top:1064.5px;width:1395.0px;height:2.0px;background:#e4e4e4"></div>
<div class="r" style="left:1249.6px;top:1091.5px;width:1394.9px;height:62.5px;border:2px solid #d9d9d9;border-radius:16px;background:#fff;box-shadow:0 2px 0 rgba(0,0,0,.015)"></div>
<div class="t" style="left:1249.6px;width:1394.9px;text-align:center;top:1110.2px;font-size:28px;color:#000">Tümünü Göster</div>
<div class="r" style="left:443.6px;top:1386.8px;width:2270.4px;height:313.2px;background:#fff;border-radius:0 20px 0 0"></div>
<div class="r" style="left:445.0px;top:1310.2px;width:288.8px;height:77.8px;background:#fff;border:1.6px solid #e8e8e8;border-bottom:none;border-radius:16px 16px 0 0"></div>
<div class="t " style="left:479.4px;top:1335.5px;font-size:28px;color:#000;font-weight:400;letter-spacing:-0.1px">En Yakın Hastane</div>
<svg style="left:1510px;top:1498px" width="140" height="90" viewBox="0 0 140 90"><ellipse cx="69" cy="73.2" rx="62.5" ry="11.6" fill="#f0f0f0"/><path d="M24.6 31.9L43.5 8.8Q45 6.75 47.5 6.75H90Q92 6.75 93.8 8.8L113.8 31.9Z" fill="#fff"/><path d="M24.6 31.9L43.5 8.8Q45 6.75 47.5 6.75H90Q92 6.75 93.8 8.8L113.8 31.9" fill="none" stroke="#d9d9d9" stroke-width="1.8" stroke-linejoin="round"/><path d="M24.6 31.9V68.5Q24.6 75.2 31.3 75.2H107.2Q113.8 75.2 113.8 68.5V31.9H97C92 31.9 89 33 88.3 37.5C87.6 42 85.5 43.9 82.8 43.9H56C53 43.9 51.5 42 50.8 37.5C50 33 47.5 31.9 42 31.9Z" fill="#fafafa" stroke="#d9d9d9" stroke-width="1.8" stroke-linejoin="round"/></svg>
<div class="t " style="left:1529.7px;top:1607.3px;font-size:28px;color:#555;font-weight:400;">Veri Yok</div>
<div class="r" style="left:354.0px;top:1560.0px;width:2466.0px;height:101.0px;background:linear-gradient(180deg,rgba(0,0,0,0) 0%,rgba(0,0,0,.012) 50%,rgba(0,0,0,.07) 100%)"></div>
<div class="r" style="left:354.0px;top:122.6px;width:2466.0px;height:2.0px;background:#94b2b4"></div>
</div>
</body></html>
